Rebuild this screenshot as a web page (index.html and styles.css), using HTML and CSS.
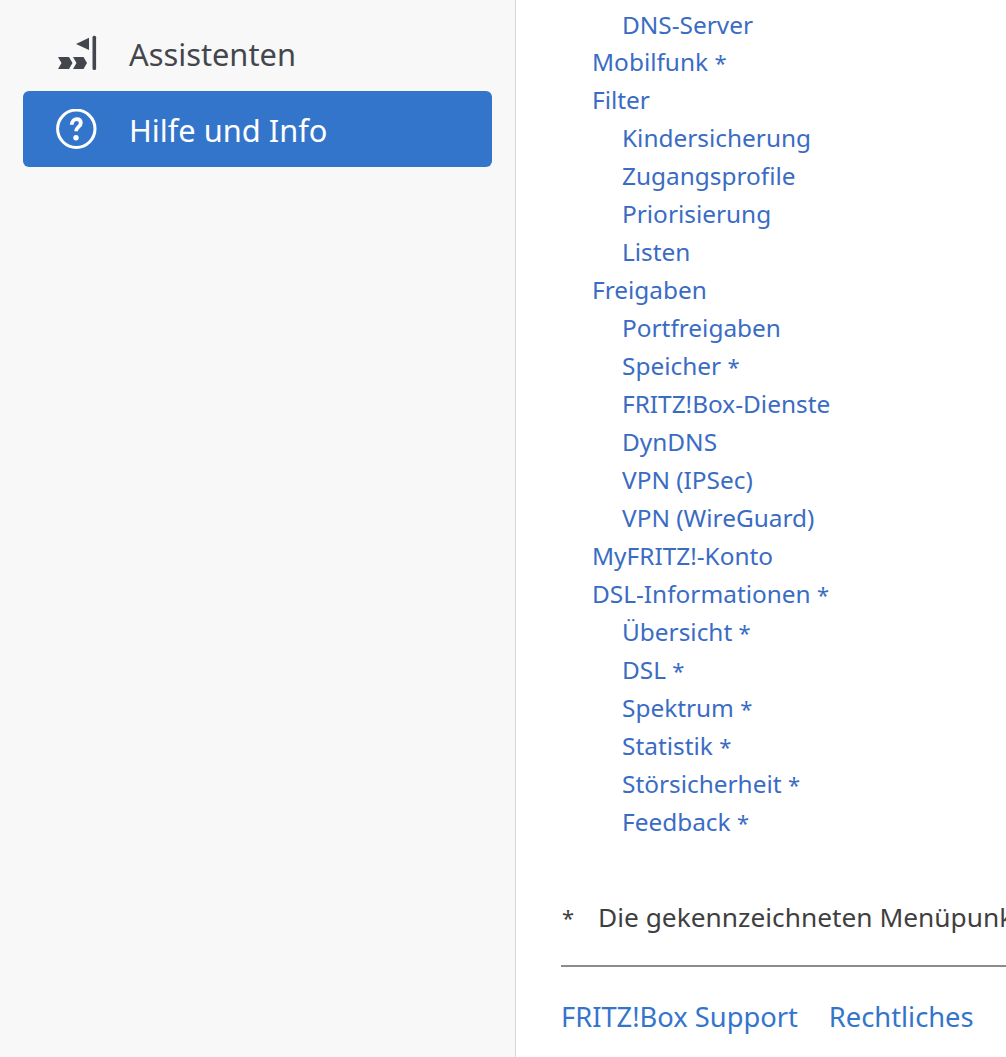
FILE: index.html
```html
<!DOCTYPE html>
<html lang="de">
<head>
<meta charset="utf-8">
<title>Hilfe und Info</title>
<link rel="stylesheet" href="styles.css">
</head>
<body>
<div class="page">
  <aside class="sidebar">
    <a class="nav-item" href="#">
      <svg class="nav-icon" viewBox="0 0 41 41" aria-hidden="true"><rect x="36.500" y="2.700" width="3.600" height="34.300" rx="1.500"/><path d="M20 11L33 4.700V17zM2 24H13L16.500 30L13 36H2L5.500 30zM17 24H27.500L31 30L27.500 36H17L20.500 30z"/></svg>
      <span>Assistenten</span>
    </a>
    <a class="nav-item active" href="#">
      <svg class="nav-icon" viewBox="0 0 41 41" aria-hidden="true"><circle cx="20.300" cy="19.800" r="18.700" fill="none" stroke="#fff" stroke-width="3"/><path d="M15.800 15.700c.1-3.300 2.200-5.500 4.900-5.500 2.600 0 4.100 1.500 4.100 3.700 0 4-4.800 3.900-4.800 8.400" fill="none" stroke="#fff" stroke-width="3.800"/><circle cx="20" cy="28.800" r="2.700" fill="#fff"/></svg>
      <span>Hilfe und Info</span>
    </a>
  </aside>
  <main class="content">
    <ul class="tree">
      <li class="l2"><a href="#">DNS-Server</a></li>
      <li class="l1"><a href="#">Mobilfunk <span class="mark">*</span></a></li>
      <li class="l1"><a href="#">Filter</a></li>
      <li class="l2"><a href="#">Kindersicherung</a></li>
      <li class="l2"><a href="#">Zugangsprofile</a></li>
      <li class="l2"><a href="#">Priorisierung</a></li>
      <li class="l2"><a href="#">Listen</a></li>
      <li class="l1"><a href="#">Freigaben</a></li>
      <li class="l2"><a href="#">Portfreigaben</a></li>
      <li class="l2"><a href="#">Speicher <span class="mark">*</span></a></li>
      <li class="l2"><a href="#">FRITZ!Box-Dienste</a></li>
      <li class="l2"><a href="#">DynDNS</a></li>
      <li class="l2"><a href="#">VPN (IPSec)</a></li>
      <li class="l2"><a href="#">VPN (WireGuard)</a></li>
      <li class="l1"><a href="#">MyFRITZ!-Konto</a></li>
      <li class="l1"><a href="#">DSL-Informationen <span class="mark">*</span></a></li>
      <li class="l2"><a href="#">Übersicht <span class="mark">*</span></a></li>
      <li class="l2"><a href="#">DSL <span class="mark">*</span></a></li>
      <li class="l2"><a href="#">Spektrum <span class="mark">*</span></a></li>
      <li class="l2"><a href="#">Statistik <span class="mark">*</span></a></li>
      <li class="l2"><a href="#">Störsicherheit <span class="mark">*</span></a></li>
      <li class="l2"><a href="#">Feedback <span class="mark">*</span></a></li>
    </ul>
    <p class="note"><span class="star">*</span><span class="note-text">Die gekennzeichneten Menüpunkte werden nur in bestimmten Betriebsarten angezeigt.</span></p>
    <hr class="rule">
    <footer class="foot">
      <a href="#">FRITZ!Box Support</a>
      <a href="#">Rechtliches</a>
    </footer>
  </main>
</div>
</body>
</html>
```
FILE: styles.css
```css
* { box-sizing: border-box; }
html, body { margin: 0; height: 100%; overflow: hidden; background: #fff; }
body { font-family: "Noto Sans", "Lato", sans-serif; color: #3f3f3f; font-variant-ligatures: none; }
a { text-decoration: none; }
.page { display: flex; height: 1057px; width: 1006px; overflow: hidden; }
.sidebar {
  flex: 0 0 516px;
  background: #f8f8f8;
  border-right: 1px solid #d6d6d6;
  padding: 16px 23px 0;
  display: flex;
  flex-direction: column;
}
.nav-item {
  display: flex;
  align-items: center;
  height: 75px;
  padding-left: 33px;
  gap: 32px;
  font-size: 30.8px;
  color: #43474d;
  border-radius: 6px;
}
.nav-item.active { height: 76px; background: #3475cc; color: #fff; }
.nav-item.active span { padding-top: 2px; }
.nav-icon { width: 41px; height: 41px; fill: #43474d; flex: none; }
.content { flex: 1 1 auto; min-width: 0; padding: 6px 0 0 45px; white-space: nowrap; overflow: hidden; }
.tree { list-style: none; margin: 0; padding: 0 0 0 1px; font-size: 24.4px; line-height: 38px; }
.tree li { height: 38px; }
.tree li:first-child { height: 37px; line-height: 37px; }
.tree a { color: #3a6cc4; }
.mark { font-size: 22px; line-height: 0; }
.l1 { padding-left: 30px; }
.l2 { padding-left: 60px; }
.note { margin: 57px 0 0 1px; font-size: 26.3px; line-height: 38px; color: #3f3f3f; display: flex; }
.star { width: 36px; flex: none; font-size: 22px; }
.rule { border: 0; border-top: 2px solid #8c8c8c; margin: 29px 0 0; }
.foot { display: flex; gap: 31px; margin: 29px 0 0 0; font-size: 27.3px; line-height: 42px; }
.foot a { color: #3475cc; }
```
